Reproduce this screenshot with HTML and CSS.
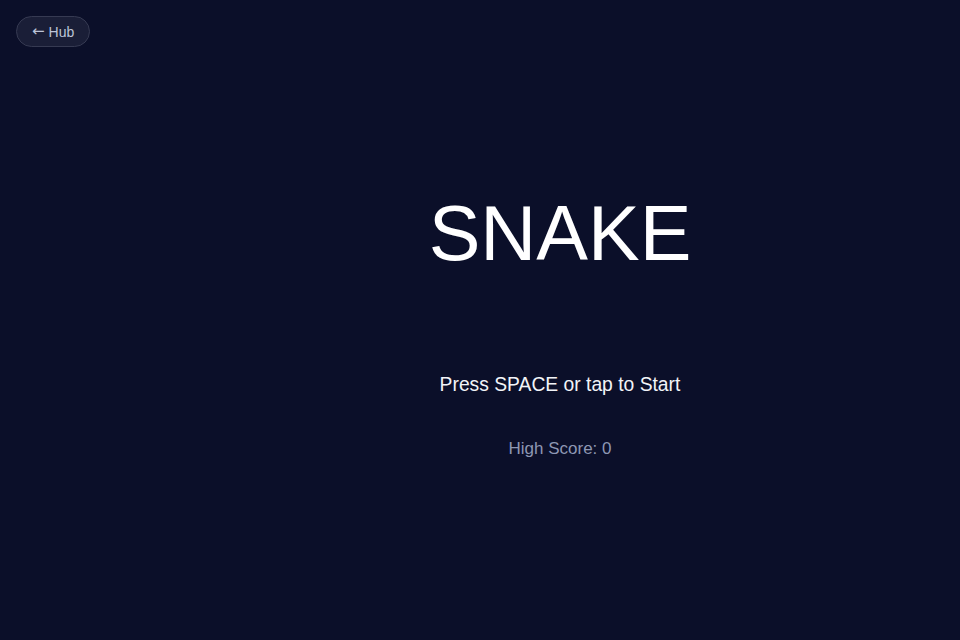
FILE: index.html
```html
<!DOCTYPE html>
<html lang="en">
<head>
<meta charset="utf-8">
<title>Snake</title>
<link rel="stylesheet" href="styles.css">
</head>
<body>
<div class="page">
  <header class="topbar">
    <a class="hub-btn" href="#"><span class="arrow">←</span> Hub</a>
  </header>
  <main class="stage">
    <h1 class="title">SNAKE</h1>
    <p class="prompt">Press SPACE or tap to Start</p>
    <p class="score">High Score: 0</p>
  </main>
</div>
</body>
</html>
```

FILE: styles.css
```css
* { box-sizing: border-box; }
html, body {
  margin: 0;
  padding: 0;
  width: 960px;
  height: 640px;
  background: #0b0f29;
  font-family: "Liberation Sans", Arial, sans-serif;
  overflow: hidden;
}
.page {
  width: 960px;
  height: 640px;
  display: flex;
  flex-direction: column;
}
.topbar {
  padding: 16px 0 0 16px;
  display: flex;
}
.hub-btn {
  display: inline-flex;
  align-items: center;
  gap: 4px;
  width: 74px;
  height: 31px;
  padding: 0 0 0 15px;
  border-radius: 16px;
  background: #1a1e37;
  border: 1px solid #363a52;
  color: #bcc4d8;
  font-size: 14px;
  text-decoration: none;
}
.arrow {
  font-family: "DejaVu Sans", sans-serif;
  font-size: 15px;
  line-height: 1;
}
.stage {
  margin-left: 160px;
  width: 800px;
  display: flex;
  flex-direction: column;
  align-items: center;
}
.title {
  margin: 147px 0 0;
  font-size: 77.5px;
  font-weight: 400;
  line-height: 78px;
  color: #ffffff;
}
.prompt {
  margin: 101px 0 0;
  font-size: 19.3px;
  line-height: 24px;
  color: #f2f4f8;
}
.score {
  margin: 42px 0 0;
  font-size: 17px;
  line-height: 20px;
  color: #8e97b3;
}
```
